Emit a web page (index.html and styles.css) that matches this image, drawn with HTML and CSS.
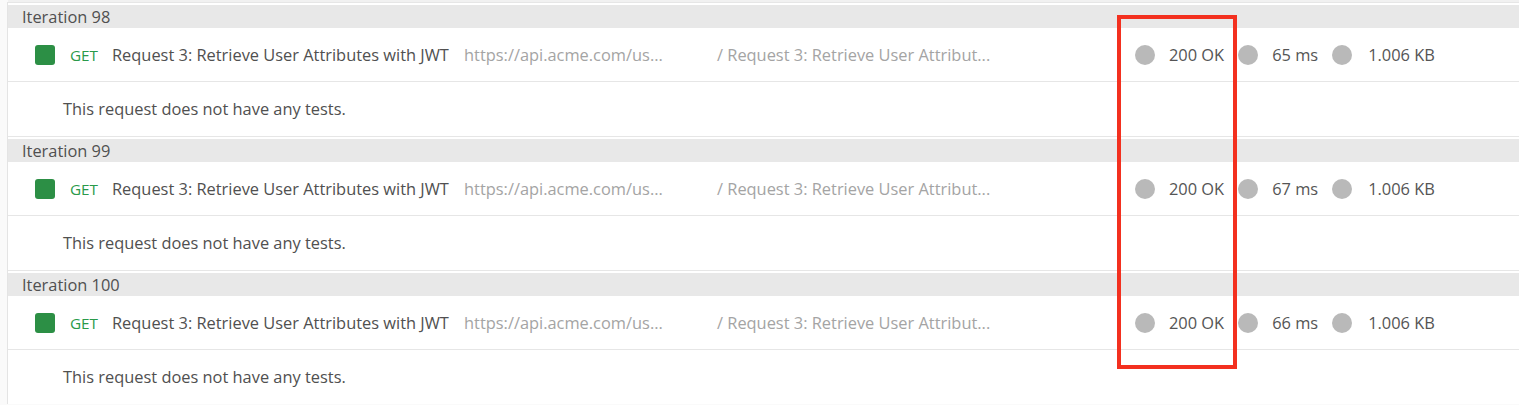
FILE: index.html
```html
<!DOCTYPE html>
<html lang="en">
<head>
<meta charset="utf-8">
<title>Runner results</title>
<link rel="stylesheet" href="styles.css">
</head>
<body>
<div class="page">
  <div class="top-strip"></div>
  <div class="results">
    <section class="iteration">
      <div class="iter-head">Iteration 98</div>
      <div class="req-row">
        <span class="method-box"></span>
        <span class="method">GET</span>
        <span class="req-name">Request 3: Retrieve User Attributes with JWT</span>
        <span class="req-url">https://api.acme.com/us...</span>
        <span class="req-path">/ Request 3: Retrieve User Attribut...</span>
        <span class="stats">
          <span class="stat"><span class="dot"></span><span class="stat-text">200 OK</span></span>
          <span class="stat"><span class="dot"></span><span class="stat-text">65 ms</span></span>
          <span class="stat"><span class="dot"></span><span class="stat-text">1.006 KB</span></span>
        </span>
      </div>
      <div class="tests-row">This request does not have any tests.</div>
    </section>
    <section class="iteration">
      <div class="iter-head">Iteration 99</div>
      <div class="req-row">
        <span class="method-box"></span>
        <span class="method">GET</span>
        <span class="req-name">Request 3: Retrieve User Attributes with JWT</span>
        <span class="req-url">https://api.acme.com/us...</span>
        <span class="req-path">/ Request 3: Retrieve User Attribut...</span>
        <span class="stats">
          <span class="stat"><span class="dot"></span><span class="stat-text">200 OK</span></span>
          <span class="stat"><span class="dot"></span><span class="stat-text">67 ms</span></span>
          <span class="stat"><span class="dot"></span><span class="stat-text">1.006 KB</span></span>
        </span>
      </div>
      <div class="tests-row">This request does not have any tests.</div>
    </section>
    <section class="iteration">
      <div class="iter-head">Iteration 100</div>
      <div class="req-row">
        <span class="method-box"></span>
        <span class="method">GET</span>
        <span class="req-name">Request 3: Retrieve User Attributes with JWT</span>
        <span class="req-url">https://api.acme.com/us...</span>
        <span class="req-path">/ Request 3: Retrieve User Attribut...</span>
        <span class="stats">
          <span class="stat"><span class="dot"></span><span class="stat-text">200 OK</span></span>
          <span class="stat"><span class="dot"></span><span class="stat-text">66 ms</span></span>
          <span class="stat"><span class="dot"></span><span class="stat-text">1.006 KB</span></span>
        </span>
      </div>
      <div class="tests-row">This request does not have any tests.</div>
    </section>
  </div>
  <div class="highlight"></div>
</div>
</body>
</html>
```

FILE: styles.css
```css
html, body {
  margin: 0;
  padding: 0;
  background: #ffffff;
}

body {
  font-family: "Open Sans", "Noto Sans", sans-serif;
  font-size: 16.4px;
  color: #505050;
}

.page {
  position: relative;
  width: 1519px;
  height: 405px;
  overflow: hidden;
  background: #fafafa;
}

.top-strip {
  height: 2px;
  margin-left: 8px;
  background: #f1f1f1;
}

.results {
  margin-left: 7px;
  border-left: 1px solid #e4e4e4;
  background: #ffffff;
}

.iteration {
  border-top: 1px solid #e6e6e6;
  padding-top: 2px;
}

.iter-head {
  height: 23px;
  line-height: 23px;
  padding-left: 14px;
  background: #e8e8e8;
  color: #505050;
}

.req-row {
  display: flex;
  align-items: center;
  height: 53px;
  border-bottom: 1px solid #e6e6e6;
  padding-left: 27px;
  white-space: nowrap;
}

.method-box {
  width: 20px;
  height: 20px;
  border-radius: 3px;
  background: #2c8f45;
  flex: none;
}

.method {
  margin-left: 15px;
  width: 42px;
  color: #2a9a4a;
  font-size: 15.3px;
  flex: none;
}

.req-name {
  width: 352px;
  color: #505050;
  flex: none;
}

.req-url {
  width: 253px;
  color: #a4a4a4;
  flex: none;
}

.req-path {
  width: 418px;
  color: #a4a4a4;
  flex: none;
}

.stats {
  display: flex;
  align-items: center;
  gap: 14px;
}

.stat {
  display: flex;
  align-items: center;
  gap: 14px;
}

.stat:nth-child(3) {
  gap: 16px;
}

.dot {
  width: 20px;
  height: 20px;
  border-radius: 50%;
  background: #b9b9b9;
  flex: none;
}

.stat-text {
  color: #555555;
}

.tests-row {
  height: 54px;
  line-height: 54px;
  padding-left: 55px;
  color: #505050;
}

.highlight {
  position: absolute;
  left: 1117px;
  top: 15px;
  width: 112px;
  height: 346px;
  border: 4px solid #f3301f;
  pointer-events: none;
}
```
